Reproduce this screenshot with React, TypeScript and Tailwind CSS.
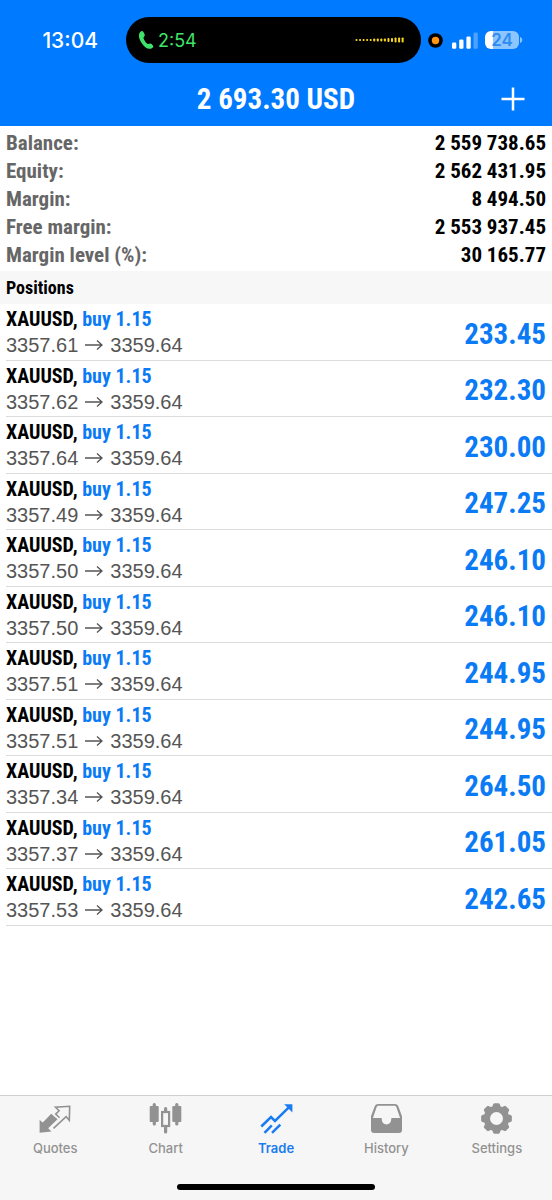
import type { ReactNode } from "react";

const account = [
  ["Balance:", "2 559 738.65"],
  ["Equity:", "2 562 431.95"],
  ["Margin:", "8 494.50"],
  ["Free margin:", "2 553 937.45"],
  ["Margin level (%):", "30 165.77"],
];

const positions = [
  ["3357.61", "233.45"],
  ["3357.62", "232.30"],
  ["3357.64", "230.00"],
  ["3357.49", "247.25"],
  ["3357.50", "246.10"],
  ["3357.50", "246.10"],
  ["3357.51", "244.95"],
  ["3357.51", "244.95"],
  ["3357.34", "264.50"],
  ["3357.37", "261.05"],
  ["3357.53", "242.65"],
];

const condensed =
  "font-['Liberation_Sans_Narrow','Arial_Narrow','Roboto_Condensed','Liberation_Sans',sans-serif] font-bold";

function StatusBar() {
  return (
    <div className="grid grid-cols-[126px_1fr_131px] items-center pt-[17px]">
      <time className="pt-[2px] pr-7 text-right text-[21px] font-medium text-white">13:04</time>
      <div className="flex h-[46px] items-center rounded-full bg-black pr-4 pl-3 text-[#3fe36a]">
        <svg className="h-5 w-4" viewBox="0 0 16 20" fill="currentColor" aria-hidden="true">
          <path d="M1.400 3.200C2.600 1 4.400.3 5.300 1.700l1.300 2.500c.5 1 .1 1.700-.6 2.500-.6.7-.6 1.200-.2 2.200.7 1.700 1.900 3.500 3.300 4.600.8.7 1.300.7 2.100.3.900-.5 1.700-.5 2.400.2l1.300 1.400c1.100 1.200-.4 3-2.700 3.400-3 .5-6.300-2.200-8.600-5.900C1.200 9.400.2 5.500 1.400 3.200Z" />
        </svg>
        <span className="ml-1 pt-px text-lg">2:54</span>
        <svg className="ml-auto h-2 w-[50px]" viewBox="0 0 50 8" fill="#f4d51f" aria-hidden="true">
          {Array.from({ length: 14 }, (_, i) => {
            const height = i < 5 ? 2 : i < 9 ? 3 : i < 11 ? 4 : 5;
            return <rect key={i} x={0.5 + i * 3.55} y={4 - height / 2} width="2" height={height} rx="0.8" />;
          })}
        </svg>
      </div>
      <div className="flex items-center pl-[7px]">
        <svg className="size-[15px]" viewBox="0 0 15 15" aria-hidden="true">
          <circle cx="7.500" cy="7.500" r="7.300" fill="#000" />
          <circle cx="7.500" cy="7.500" r="3.700" fill="#ff9712" />
        </svg>
        <svg className="ml-[9px] h-[17px] w-[26px]" viewBox="0 0 26 17" fill="#fff" aria-hidden="true">
          <rect x="0" y="10.500" width="4.300" height="6.300" rx="1.200" />
          <rect x="7.200" y="7.500" width="4.300" height="9.300" rx="1.200" />
          <rect x="14.400" y="4.500" width="4.300" height="12.300" rx="1.200" />
          <rect x="21.500" y="0.500" width="4.300" height="16.300" rx="1.200" opacity="0.3" />
        </svg>
        <div className="ml-[7px] flex h-[18px] w-[34px] items-center justify-center rounded-md bg-[linear-gradient(90deg,#fff_24%,#8cc5ff_24%)] text-[17px] leading-[18px] font-semibold text-[#2e8cf0]">
          24
        </div>
        <svg className="ml-px h-[6px] w-[3px]" viewBox="0 0 3 6" fill="#8cc5ff" aria-hidden="true">
          <path d="M0 0c3 1 3 5 0 6Z" />
        </svg>
      </div>
    </div>
  );
}

function QuotesIcon() {
  return (
    <>
      <path fill="currentColor" d="M.6 29.700V17l3.200 2.500L12.200 10.700l6.300 5.500L9.200 25.300l3.300 3.200Z" />
      <path
        fill="none"
        stroke="currentColor"
        strokeWidth="1.600"
        d="m14.500 25.300 12.600-11.700 3.200 3.700.4-14-14.200.9 3.600 3.600-3.400 3.300 3.800 3.700"
      />
    </>
  );
}

function ChartIcon() {
  return (
    <>
      <g fill="currentColor">
        <rect x="0.700" y="3" width="9" height="16" rx="1" />
        <rect x="3.700" y="0" width="3.200" height="22.500" rx="1.500" />
        <rect x="23.300" y="3" width="9" height="16" rx="1" />
        <rect x="26.200" y="0" width="3.200" height="22.500" rx="1.500" />
        <rect x="15" y="4" width="3.200" height="6" rx="1.500" />
        <rect x="15" y="23" width="3.200" height="7.500" rx="1.500" />
      </g>
      <rect x="13.100" y="9" width="7" height="14" fill="none" stroke="currentColor" strokeWidth="2.200" />
    </>
  );
}

function TradeIcon() {
  return (
    <g fill="none" stroke="currentColor" strokeWidth="2.500">
      <path d="M1.300 23.500 11 14l4 4L29.600 3.600" />
      <path d="M24.200 1.200h8.200v8.300Z" fill="currentColor" stroke="none" />
      <path d="m4.500 29.900 7.300-7.600M12 29.900l8.300-8.300" />
    </g>
  );
}

function HistoryIcon() {
  return (
    <path
      fill="currentColor"
      fillRule="evenodd"
      d="M8.300 1h16.400c1.900 0 3 .8 3.700 2.500L32 13.200V27c0 2-1 3-3 3H4c-2 0-3-1-3-3V13.200l3.600-9.700C5.300 1.800 6.400 1 8.300 1Zm.5 1.700c-1.200 0-1.800.5-2.200 1.500L2.900 14.900H11c.6 0 .8.4.8 1.300 0 2.900 2 5.200 4.700 5.200s4.700-2.300 4.700-5.200c0-.9.2-1.300.8-1.300h8.100L26.400 4.200c-.4-1-1-1.500-2.200-1.500Z"
    />
  );
}

const gearPath = (() => {
  const points: string[] = [];
  for (let tooth = 0; tooth < 8; tooth++) {
    [
      [-16, 11.5],
      [-8, 14.2],
      [8, 14.2],
      [16, 11.5],
    ].forEach(([offset, radius]) => {
      const angle = ((tooth * 45 + offset) * Math.PI) / 180;
      points.push(`${(16.5 + radius * Math.sin(angle)).toFixed(2)} ${(15.5 - radius * Math.cos(angle)).toFixed(2)}`);
    });
  }
  return `M${points.join("L")}ZM16.500 7.700a7.800 7.800 0 1 0 0 15.600 7.800 7.800 0 0 0 0-15.600Z`;
})();

function SettingsIcon() {
  return (
    <path d={gearPath} fill="currentColor" fillRule="evenodd" stroke="currentColor" strokeWidth="2.600" strokeLinejoin="round" />
  );
}

function Tab({ label, active, children }: { label: string; active?: boolean; children: ReactNode }) {
  return (
    <a
      href={`#${label.toLowerCase()}`}
      aria-current={active ? "page" : undefined}
      className={`flex flex-1 flex-col items-center gap-1 text-[13px] leading-5 ${
        active ? "font-semibold text-[#1a7cf0]" : "font-medium text-[#929292]"
      }`}
    >
      <svg className="h-[31px] w-[33px]" viewBox="0 0 33 31" aria-hidden="true">
        {children}
      </svg>
      {label}
    </a>
  );
}

export default function App() {
  return (
    <div className="flex min-h-screen flex-col bg-white font-[Inter,sans-serif] text-black">
      <header className="bg-[#007aff]">
        <StatusBar />
        <div className="grid h-[63px] grid-cols-[1fr_auto_1fr] items-center pt-2 pr-6">
          <h1 className={`${condensed} col-start-2 pl-6 text-[29px] leading-8 text-white`}>2 693.30 USD</h1>
          <button type="button" aria-label="New order" className="justify-self-end text-white">
            <svg className="size-[30px]" viewBox="0 0 30 30" fill="none" stroke="currentColor" strokeWidth="2.500" aria-hidden="true">
              <path d="M15 3.500v23M3.500 15h23" />
            </svg>
          </button>
        </div>
      </header>

      <main className="flex-1">
        <dl className={`${condensed} px-[6px] pt-[3px] pb-[2px] text-[21px] leading-7`}>
          {account.map(([label, value]) => (
            <div key={label} className="flex justify-between">
              <dt className="text-[#666]">{label}</dt>
              <dd>{value}</dd>
            </div>
          ))}
        </dl>
        <h2 className={`${condensed} bg-[#f7f7f7] px-[6px] text-lg leading-[33px]`}>Positions</h2>
        <ul>
          {positions.map(([open, profit], i) => (
            <li key={i} className="ml-[6px] flex items-center justify-between border-b border-[#dcdcdf] pr-[6px] odd:h-[57px] even:h-14">
              <div>
                <p className={`${condensed} text-xl leading-[26px]`}>
                  XAUUSD, <span className="text-[#0a7bf5]">buy 1.15</span>
                </p>
                <p className="flex items-center font-['Liberation_Sans',sans-serif] text-xl leading-[26px] text-[#555]">
                  {open}
                  <svg className="mx-[6px] h-3 w-5" viewBox="0 0 20 12" fill="none" stroke="currentColor" strokeWidth="1.300" role="img" aria-label="to">
                    <path d="M1 6h17M13 1.500 18 6l-5 4.500" />
                  </svg>
                  3359.64
                </p>
              </div>
              <span className={`${condensed} pt-[3px] text-[29px] leading-8 text-[#0a7bf5]`}>{profit}</span>
            </li>
          ))}
        </ul>
      </main>

      <footer className="border-t border-[#d0d0d0] bg-[#f6f6f6] pt-[7px] pb-[10px]">
        <nav className="flex">
          <Tab label="Quotes"><QuotesIcon /></Tab>
          <Tab label="Chart"><ChartIcon /></Tab>
          <Tab label="Trade" active><TradeIcon /></Tab>
          <Tab label="History"><HistoryIcon /></Tab>
          <Tab label="Settings"><SettingsIcon /></Tab>
        </nav>
        <div className="mx-auto mt-[26px] h-[6px] w-[198px] rounded-full bg-black" />
      </footer>
    </div>
  );
}
